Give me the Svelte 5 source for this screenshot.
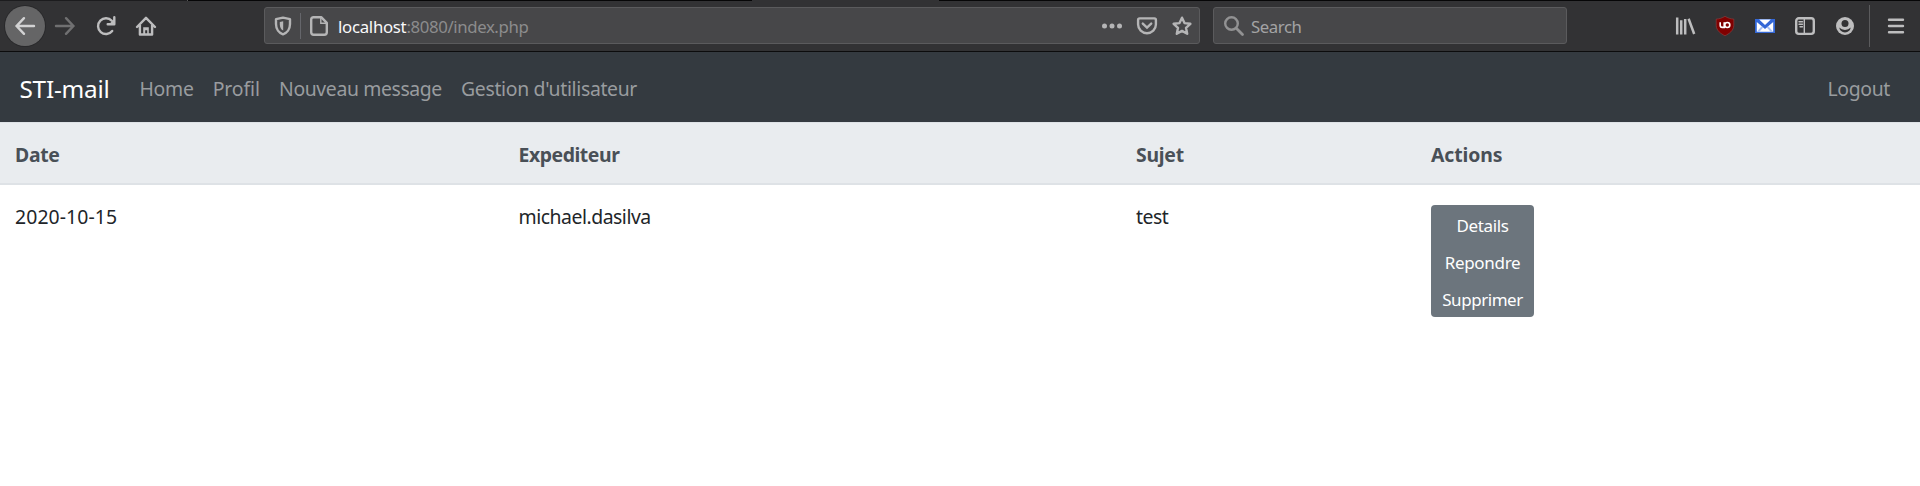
<script>
  const links = [
    { label: 'Home', spacing: -0.3 },
    { label: 'Profil', spacing: -0.1 },
    { label: 'Nouveau message', spacing: -0.38 },
    { label: "Gestion d'utilisateur", spacing: -0.33 }
  ];

  const columns = [
    { label: 'Date', spacing: -0.3 },
    { label: 'Expediteur', spacing: -0.43 },
    { label: 'Sujet', spacing: -0.25 },
    { label: 'Actions', spacing: -0.1 }
  ];

  const messages = [{ date: '2020-10-15', sender: 'michael.dasilva', subject: 'test' }];

  const actions = [
    { label: 'Details', spacing: -0.35 },
    { label: 'Repondre', spacing: -0.3 },
    { label: 'Supprimer', spacing: -0.45 }
  ];
</script>

<header class="toolbar">
  <div class="group nav-buttons">
    <span class="slot back">
      <svg viewBox="0 0 20 20"><path d="M19 10H2M9 2.2L1.6 10L9 17.8" class="line" /></svg>
    </span>
    <span class="slot dim">
      <svg viewBox="0 0 20 20"><path d="M1 10H18M11 2.2L18.4 10L11 17.8" class="line" /></svg>
    </span>
    <span class="slot">
      <svg viewBox="0 0 20 20"><path d="M16.2 15A7.9 7.9 0 1 1 15.8 4.8" class="line" /><path d="M18.3 1.2V8.2H11.7" class="line join" /><path d="M18.3 3V8.2H13Z" class="fill" /></svg>
    </span>
    <span class="slot">
      <svg viewBox="0 0 20 20"><path d="M1 11L10 1.8L19 11M3.9 9V18.5H16.1V9" class="line join" /><path d="M7.2 18.5V11.2H12.8V18.5H11.2V14.3H9.2V18.5Z" class="fill" /></svg>
    </span>
  </div>

  <div class="field url">
    <svg class="shield" viewBox="0 0 20 20"><path d="M10 1.6L17 3.2V8C17 13 14 17 10 18.3C6 17 3 13 3 8V3.2Z" class="line join" /><path d="M10.2 5.3L6.8 6.1V8.4C6.8 11.4 8.2 13.5 10.2 14.5Z" class="fill" /></svg>
    <span class="rule"></span>
    <svg class="page" viewBox="0 0 20 20"><path d="M4.2 1.2H12.2L17.8 6.8V16.3Q17.8 18.8 15.3 18.8H4.7Q2.2 18.8 2.2 16.3V3.5Q2.2 1.2 4.5 1.2Z" class="line join" /><path d="M11.8 1.6V7.2H17.4" class="line thin" /></svg>
    <span class="address"><b>localhost</b><i>:8080/index.php</i></span>
    <svg class="end" viewBox="0 0 20 20"><circle cx="2.5" cy="10" r="2.5" class="fill" /><circle cx="10" cy="10" r="2.5" class="fill" /><circle cx="17.5" cy="10" r="2.5" class="fill" /></svg>
    <svg class="end" viewBox="0 0 20 20"><path d="M2.6 2.4H17.4Q18.9 2.4 18.9 3.9V8.6A8.9 8.6 0 0 1 1.1 8.6V3.9Q1.1 2.4 2.6 2.4Z" class="line" /><path d="M5.8 7.6L10 11.6L14.2 7.6" class="line" /></svg>
    <svg class="end" viewBox="0 0 20 20"><path d="M10 1.7L12.5 7.1L18.4 7.8L14 11.8L15.2 17.8L10 14.9L4.8 17.8L6 11.8L1.6 7.8L7.5 7.1Z" class="line join" /></svg>
  </div>

  <div class="field search">
    <svg viewBox="0 0 20 20"><circle cx="7.5" cy="7.5" r="6.3" class="line" /><path d="M12.3 12.3L18.5 18.5" class="line handle" /></svg>
    <span>Search</span>
  </div>

  <div class="group tools">
    <span class="slot">
      <svg viewBox="0 0 20 20"><path d="M2.2 1.6V18.5M6.2 4.2V18.5M10.2 3V18.5M13.6 2.8L19.2 18" class="line books" /></svg>
    </span>
    <span class="slot">
      <svg viewBox="0 0 20 20"><path d="M10 .3C12.8 2 15.8 3 18.8 3.1V9.7C18.4 14.7 14.2 17.8 10 19.7C5.8 17.8 1.6 14.7 1.2 9.7V3.1C4.2 3 7.2 2 10 .3Z" fill="#800000" stroke="#8b4444" stroke-width=".6" /><path d="M5.2 6.2V9.2Q5.2 11.4 7.2 11.4H9.2V6.2" fill="none" stroke="#fff" stroke-width="1.6" /><circle cx="12.3" cy="9" r="2.5" fill="none" stroke="#fff" stroke-width="1.6" /></svg>
    </span>
    <span class="slot">
      <svg viewBox="0 0 20 20"><path d="M0 3H20V17H0Z" fill="#3367d6" /><path d="M1.8 6V15.7H18.2V6L10 13Z" fill="#fff" /><path d="M4.2 3.6H15.8L10 9Z" fill="#fff" /><path d="M1.8 15.7L6.6 10.2L8.2 11.6L4.4 15.7ZM18.2 15.7L13.4 10.2L11.8 11.6L15.6 15.7Z" fill="#a9c2f5" /></svg>
    </span>
    <span class="slot">
      <svg viewBox="0 0 20 20"><rect x="1.2" y="2.3" width="17.6" height="15.6" rx="2.6" class="line" /><path d="M9.3 2.3V18" class="line thin" /><path d="M4 5.7H7.5M4 8.2H7.5M5 10.7H7.5" class="line thin" /></svg>
    </span>
    <span class="slot">
      <svg viewBox="0 0 20 20"><circle cx="10" cy="10" r="9" class="fill" /><circle cx="10" cy="7.6" r="3.5" fill="#323234" /><path d="M4.2 11.6Q6.5 14 10 14T15.8 11.6Q14.8 16.4 10 16.4T4.2 11.6Z" fill="#323234" /></svg>
    </span>
    <span class="divider"></span>
    <svg class="menu" viewBox="0 0 20 20"><path d="M3 3.7H17M3 10H17M3 16.3H17" class="line" /></svg>
  </div>
</header>

<nav class="navbar">
  <a class="brand" href="#top">STI-mail</a>
  <ul>
    {#each links as link}
      <li><a href="#top" style:letter-spacing="{link.spacing}px">{link.label}</a></li>
    {/each}
  </ul>
  <a class="logout" href="#top">Logout</a>
</nav>

<table>
  <colgroup><col class="c-date" /><col class="c-sender" /><col class="c-subject" /><col /></colgroup>
  <thead>
    <tr>
      {#each columns as column}
        <th style:letter-spacing="{column.spacing}px">{column.label}</th>
      {/each}
    </tr>
  </thead>
  <tbody>
    {#each messages as message}
      <tr>
        <td class="date">{message.date}</td>
        <td class="sender">{message.sender}</td>
        <td class="subject">{message.subject}</td>
        <td class="actions">
          <div class="btn-group">
            {#each actions as action}
              <button style:letter-spacing="{action.spacing}px">{action.label}</button>
            {/each}
          </div>
        </td>
      </tr>
    {/each}
  </tbody>
</table>

<style>
  :global(body) {
    margin: 0;
    background: #fff;
    overflow: hidden;
  }

  :global(#app) {
    font-family: 'Noto Sans', sans-serif;
    font-size: 19.4px;
    line-height: 30px;
    color: #212529;
  }

  .toolbar {
    box-sizing: border-box;
    display: flex;
    align-items: center;
    height: 52px;
    background:
      linear-gradient(90deg, #1c1c1e 187px, #555 187px 188px, #060607 188px 752px, #323234 752px 939px, #060607 939px) 0 0 / 100% 1px no-repeat,
      #323234;
    border-bottom: 1px solid #0c0c0d;
    color: #bdbdbe;
    font-size: 16.8px;
  }

  svg {
    width: 20px;
    height: 20px;
    flex: none;
    overflow: visible;
  }

  .line {
    fill: none;
    stroke: currentColor;
    stroke-width: 2.4;
    stroke-linecap: round;
  }

  .join {
    stroke-linejoin: round;
  }

  .thin {
    stroke-width: 1.4;
  }

  .books {
    stroke-width: 2.5;
    stroke-linecap: butt;
  }

  .handle {
    stroke-width: 2.8;
  }

  .fill {
    fill: currentColor;
  }

  .group {
    display: flex;
    align-items: center;
  }

  .slot {
    display: grid;
    place-items: center;
    width: 40px;
    height: 40px;
  }

  .nav-buttons {
    gap: 0.4px;
    padding-left: 5px;
    width: 264px;
    box-sizing: border-box;
  }

  .back {
    border-radius: 50%;
    background: #656566;
    box-shadow: 0 0 0 1px #29292b;
    color: #d2d2d3;
  }

  .dim {
    color: #707071;
  }

  .field {
    box-sizing: border-box;
    display: flex;
    align-items: center;
    height: 37px;
    border: 1px solid #5b5b5d;
    border-radius: 3px;
    background: #474749;
    color: #b5b5b6;
  }

  .url {
    width: 936px;
    padding: 0 7px 0 8px;
  }

  .shield {
    margin-right: 7px;
  }

  .rule {
    width: 1px;
    height: 26px;
    margin-right: 8px;
    background: #65666b;
  }

  .page {
    margin-right: 9px;
  }

  .address {
    flex: 1;
    white-space: nowrap;
    padding-top: 2px;
  }

  .address b {
    font-weight: 400;
    color: #f9f9fa;
    letter-spacing: -0.28px;
  }

  .address i {
    font-style: normal;
    color: #8c8c8d;
    letter-spacing: -0.38px;
  }

  .end + .end {
    margin-left: 15px;
  }

  .search {
    width: 354px;
    margin-left: 13px;
    padding-left: 10px;
    gap: 7px;
    color: #929293;
  }

  .search span {
    color: #a3a3a4;
    padding-top: 2px;
    letter-spacing: -0.45px;
  }

  .tools {
    margin-left: auto;
  }

  .divider {
    width: 1px;
    height: 42px;
    margin: 0 16px 0 4px;
    background: #5b5b5d;
  }

  .menu {
    margin-right: 14px;
  }

  .navbar {
    box-sizing: border-box;
    display: flex;
    align-items: center;
    height: 70px;
    padding: 4px 30px 0 19.5px;
    background: #343a40;
  }

  a {
    color: #999c9f;
    text-decoration: none;
    white-space: nowrap;
  }

  .brand {
    margin-right: 30px;
    color: #fff;
    font-size: 24.3px;
    letter-spacing: -0.22px;
  }

  ul {
    display: flex;
    gap: 19.2px;
    margin: 0;
    padding: 0;
    list-style: none;
  }

  .logout {
    margin-left: auto;
    letter-spacing: -0.33px;
  }

  table {
    width: 100%;
    table-layout: fixed;
    border-spacing: 0;
  }

  .c-date {
    width: 503.5px;
  }

  .c-sender {
    width: 617.5px;
  }

  .c-subject {
    width: 295px;
  }

  th {
    padding: 17px 15px 13px;
    border-top: 1px solid #dee2e6;
    border-bottom: 2px solid #dee2e6;
    background: #e9ecef;
    color: #495057;
    font-weight: 700;
    text-align: left;
  }

  td {
    padding: 17px 15px 15px;
    vertical-align: top;
  }

  .date {
    letter-spacing: 0.1px;
  }

  .sender {
    letter-spacing: -0.47px;
  }

  .subject {
    letter-spacing: -0.45px;
  }

  .actions {
    padding-top: 20px;
  }

  .btn-group {
    display: flex;
    flex-direction: column;
    width: 103px;
    height: 112px;
    border-radius: 4px;
    overflow: hidden;
    background: #6c757d;
  }

  button {
    flex: 1;
    padding: 4px 0 0;
    border: 0;
    background: none;
    color: #fff;
    font-family: inherit;
    font-size: 17px;
    line-height: 26px;
  }
</style>
